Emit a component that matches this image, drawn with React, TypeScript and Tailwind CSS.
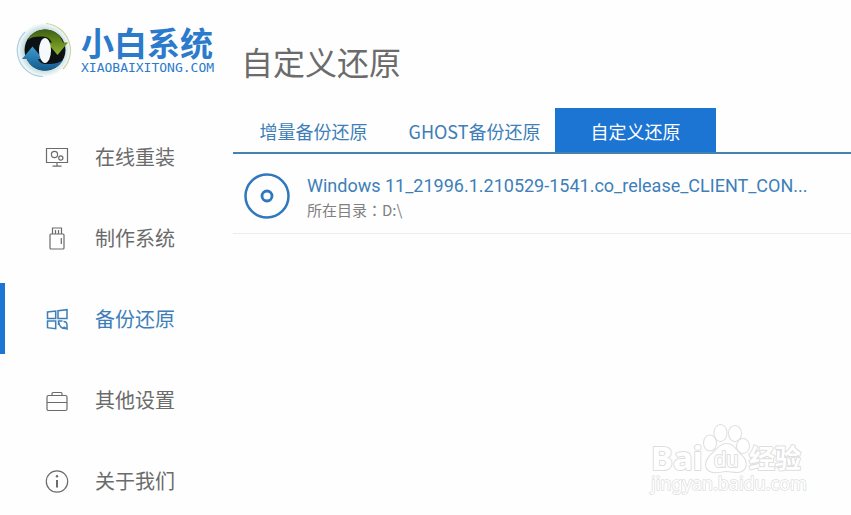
import type { ReactNode } from 'react';
import clsx from 'clsx';

function Logo() {
  return (
    <svg className="w-14 h-14 shrink-0" viewBox="0 0 56 56" fill="none" aria-hidden="true">
      <defs>
        <linearGradient id="green" x1="0" y1="0" x2="0" y2="1">
          <stop offset="0" stopColor="#3f5f12" />
          <stop offset="1" stopColor="#8fb52c" />
        </linearGradient>
        <linearGradient id="blue" x1="0" y1="0" x2="0" y2="1">
          <stop offset="0" stopColor="#3f9bd0" />
          <stop offset="1" stopColor="#125a8c" />
        </linearGradient>
        <radialGradient id="glow">
          <stop offset="0.75" stopColor="#c3dbe0" />
          <stop offset="1" stopColor="#fdfefd" />
        </radialGradient>
      </defs>
      <circle cx="28" cy="28" r="27" fill="url(#glow)" />
      <path d="M30 1.500A27 27 0 0 1 47 47" stroke="#c9d3a4" strokeWidth="1.200" />
      <path d="M9 10A26 26 0 0 0 27 54.500" stroke="#a9d0e2" strokeWidth="1.200" />
      <circle cx="29" cy="28" r="20.500" fill="#0c1214" />
      <path d="M12 18C15 11 22 7.500 29 7.500c9 0 15 5 18 13h5L41.500 33 31 20.500h5c-2-4-5-6-9-6-6 0-11 0-15 3.500Z" fill="url(#green)" />
      <path d="M47 38c-4 7-11 10.500-18 10.500-9 0-15-4-18-11.500H6L16.500 24.500 27 37h-5c1 3 4 5 8 5 6 0 12 0 17-4Z" fill="url(#blue)" />
      <ellipse cx="29" cy="28.500" rx="6" ry="12.500" fill="#f5f9fb" />
    </svg>
  );
}

const iconProps = {
  className: 'w-6 h-6 shrink-0',
  viewBox: '0 0 24 24',
  fill: 'none',
  stroke: 'currentColor',
  strokeWidth: 1.2,
  'aria-hidden': true,
} as const;

function MonitorIcon() {
  return (
    <svg {...iconProps}>
      <path d="M1.500 3.500h21v14h-21zM12 17.500v3.500M7.500 21.200h9" />
      <circle cx="9.500" cy="9.500" r="3.100" />
      <circle cx="15.800" cy="13" r="2.100" />
    </svg>
  );
}

function UsbIcon() {
  return (
    <svg {...iconProps}>
      <rect x="5" y="8" width="14" height="15" rx="1" />
      <path d="M7.500 8V2h9v6M10.500 4v4M13.500 4v4M16.300 12v6" />
    </svg>
  );
}

function BlocksIcon() {
  return (
    <svg {...iconProps} strokeWidth={1.5}>
      <path d="m2.500 5 8.200-1v7.500H2.500zM13 3.700l9-1v8.800h-9zM2.500 14h8.200v7.700l-8.200-1z" />
      <path d="M17.500 14H13.500v4M14 15.500c0 4 3 6.500 7 6M18.500 14.500c2 0 3.500 1 3.500 3.500v4l-3.500-2" />
    </svg>
  );
}

function ToolboxIcon() {
  return (
    <svg {...iconProps}>
      <rect x="2" y="7.500" width="20" height="15" rx="1.500" />
      <path d="M7 7.500V5.500Q7 4.500 8 4.500h8q1 0 1 1v2M2 14.500h20" />
    </svg>
  );
}

function InfoIcon() {
  return (
    <svg {...iconProps}>
      <circle cx="12" cy="12.500" r="10.700" />
      <path d="M12 11v7.500" strokeWidth="2" />
      <circle cx="12" cy="7.300" r="1.200" fill="currentColor" stroke="none" />
    </svg>
  );
}

const navItems: { label: string; icon: ReactNode; active?: boolean }[] = [
  { label: '在线重装', icon: <MonitorIcon /> },
  { label: '制作系统', icon: <UsbIcon /> },
  { label: '备份还原', icon: <BlocksIcon />, active: true },
  { label: '其他设置', icon: <ToolboxIcon /> },
  { label: '关于我们', icon: <InfoIcon /> },
];

const tabs = ['增量备份还原', 'GHOST备份还原', '自定义还原'];

function Sidebar() {
  return (
    <aside className="w-[233px] shrink-0">
      <a href="#home" className="flex items-center gap-[9px] pl-4 pt-[22px] text-[#2b7acb]">
        <Logo />
        <div>
          <div className="text-[33px] leading-9 font-bold whitespace-nowrap">小白系统</div>
          <div className="font-['DejaVu_Sans_Mono'] text-[13px] leading-4">XIAOBAIXITONG.COM</div>
        </div>
      </a>

      <nav className="flex flex-col gap-[10px] pt-[43px]">
        {navItems.map((item) => (
          <a
            key={item.label}
            href="#nav"
            className={clsx(
              'flex items-center gap-[26px] h-[71px] pl-10 border-l-5 text-xl',
              item.active ? 'border-[#1c75d2] text-[#3e7eb9]' : 'border-transparent text-[#6b6b6b]'
            )}
          >
            {item.icon}
            {item.label}
          </a>
        ))}
      </nav>
    </aside>
  );
}

function DiscIcon() {
  return (
    <svg className="w-12 h-12 shrink-0" viewBox="0 0 48 48" fill="none" stroke="#2f78bd" aria-hidden="true">
      <circle cx="24" cy="24" r="21.500" strokeWidth="2.500" />
      <circle cx="24" cy="24" r="5" strokeWidth="2.800" />
    </svg>
  );
}

function Watermark() {
  return (
    <svg
      className="absolute right-[43px] bottom-3 w-[160px] h-[80px] pointer-events-none"
      viewBox="0 0 160 80"
      fill="#fff"
      stroke="#dedede"
      strokeWidth="2"
      paintOrder="stroke"
      strokeLinejoin="round"
    >
      <text x="3" y="46" className="font-['Noto_Sans'] text-[33px] font-bold">Bai</text>
      <ellipse cx="62" cy="19" rx="6" ry="7.500" />
      <ellipse cx="72.500" cy="9" rx="6" ry="8" />
      <ellipse cx="87" cy="9.500" rx="6" ry="7.500" />
      <ellipse cx="95" cy="22" rx="6" ry="7" />
      <path d="M79 20c7 0 9 7 15 12 6 6 5 15-4 16-5 0-8-1-12-1s-8 2-13 1c-8-1-9-9-3-16 6-5 9-12 17-12Z" />
      <text x="66" y="43" className="font-['Liberation_Sans'] text-[22px]">du</text>
      <text x="101" y="44" className="text-[26px] font-bold">经验</text>
      <text x="3" y="66" className="font-['Noto_Sans'] text-[18px]" strokeWidth="1.500">jingyan.baidu.com</text>
    </svg>
  );
}

export default function App() {
  return (
    <div className="relative flex min-h-screen overflow-hidden bg-[#fdfefd] font-['Noto_Sans_CJK_SC',sans-serif]">
      <Sidebar />

      <main className="flex-1 min-w-0 pt-[37px]">
        <h1 className="pl-2 text-[32px] leading-12 text-[#6b6b6b]">自定义还原</h1>

        <div role="tablist" className="flex mt-[23px] border-b-2 border-[#4682b0]">
          {tabs.map((tab, i) => (
            <button
              key={tab}
              role="tab"
              aria-selected={i === 2}
              className={clsx(
                'w-[161px] h-11 pt-0.5 text-lg whitespace-nowrap',
                i === 2 ? 'bg-[#1c75d2] text-white' : 'text-[#3e7eb9]'
              )}
            >
              {tab}
            </button>
          ))}
        </div>

        <div className="flex items-center gap-4 h-20 pt-1 pl-[10px] pr-8 border-b border-[#ececec]">
          <DiscIcon />
          <div className="min-w-0">
            <div className="font-['Roboto'] text-lg leading-7 text-[#3e7eb9] whitespace-nowrap">
              Windows 11_21996.1.210529-1541.co_release_CLIENT_CON...
            </div>
            <div className="font-['Noto_Sans_CJK_TC',sans-serif] text-[15px] leading-5 text-[#808080]">
              所在目录：D:\
            </div>
          </div>
        </div>
      </main>

      <Watermark />
    </div>
  );
}
